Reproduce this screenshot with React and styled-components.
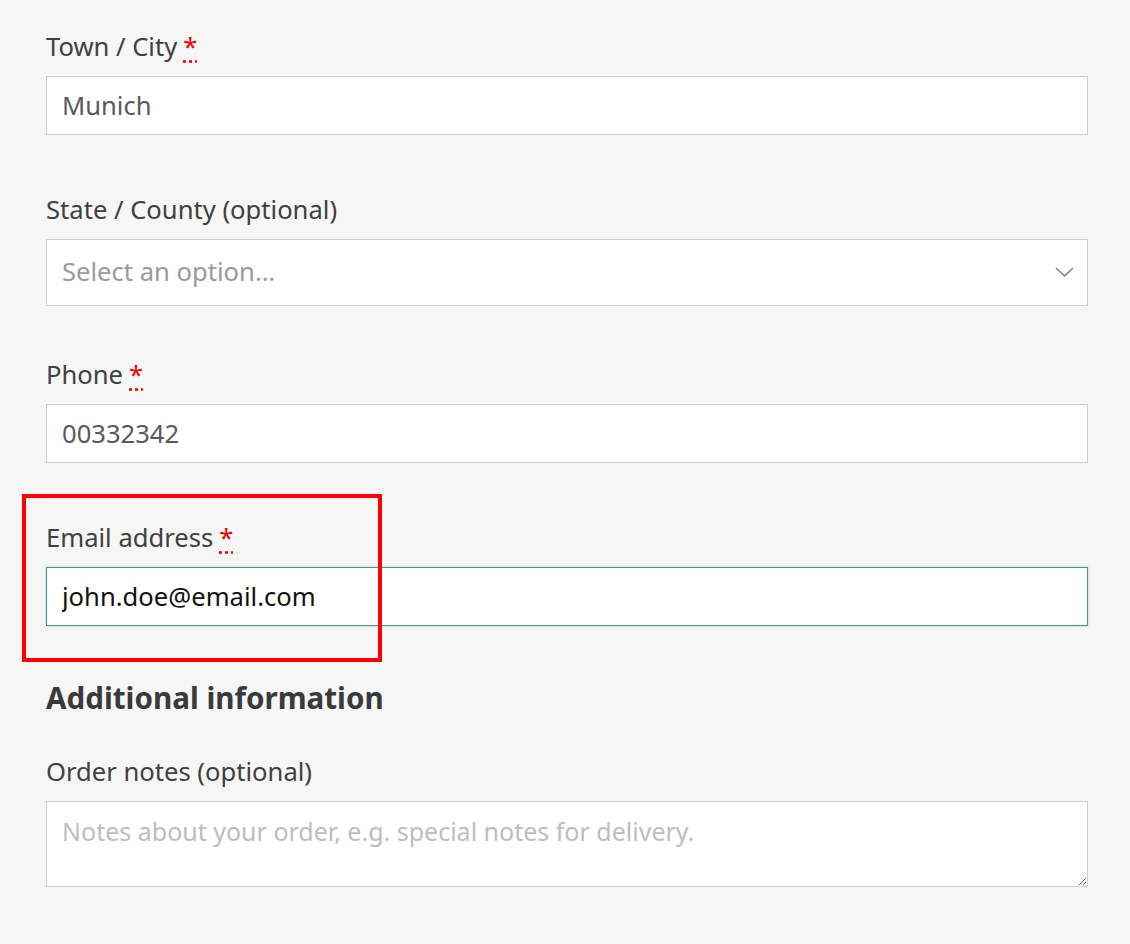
import React from 'react';
import styled, { createGlobalStyle } from 'styled-components';

const GlobalStyle = createGlobalStyle`
  html, body {
    margin: 0;
    padding: 0;
    background: #f6f6f6;
  }
  body {
    font-family: "Noto Sans", "Open Sans", sans-serif;
    color: #404040;
  }
`;

const Page = styled.main`
  box-sizing: border-box;
  width: 1130px;
  min-height: 944px;
  padding: 31px 42px 0 46px;
  background: #f6f6f6;
`;

const Field = styled.div`
  position: relative;
  display: flex;
  flex-direction: column;
  gap: 13px;
  margin-bottom: ${(p) => p.$after}px;
`;

const Label = styled.label`
  display: block;
  font-size: 25.6px;
  line-height: 32px;
  color: #404040;
`;

const Required = styled.abbr`
  color: #e00;
  margin-left: 6px;
  text-decoration: underline dotted #e00;
  text-underline-offset: 4px;
  cursor: help;
`;

const Input = styled.input`
  box-sizing: border-box;
  width: 100%;
  height: 59px;
  margin: 0;
  padding: 0 15px;
  border: 1px solid ${(p) => (p.$focus ? '#46958a' : '#d0d0d0')};
  box-shadow: ${(p) => (p.$focus ? '0 0 3px rgba(70, 149, 138, 0.35)' : 'none')};
  background: #fff;
  font-family: inherit;
  font-size: 25.6px;
  color: ${(p) => (p.$focus ? '#111' : '#5a5a5a')};
  outline: none;
`;

const SelectBox = styled.div`
  box-sizing: border-box;
  display: flex;
  align-items: center;
  justify-content: space-between;
  height: 67px;
  padding: 0 13px 2px 15px;
  border: 1px solid #d0d0d0;
  background: #fff;
  font-size: 25.6px;
  color: #9a9a9a;
  cursor: pointer;
`;

const TextArea = styled.textarea`
  box-sizing: border-box;
  display: block;
  width: 100%;
  height: 86px;
  margin: 0;
  padding: 13px 15px;
  border: 1px solid #d0d0d0;
  background: #fff;
  font-family: inherit;
  font-size: 25px;
  line-height: 32px;
  color: #333;
  outline: none;

  &::placeholder {
    color: #bdbdbd;
  }
`;

const Heading = styled.h3`
  margin: 54px 0 40px;
  font-size: 29.6px;
  line-height: 36px;
  font-weight: 700;
  color: #3a3a3a;
`;

const Highlight = styled.div`
  position: absolute;
  left: -24px;
  top: -28px;
  width: 360px;
  height: 168px;
  box-sizing: border-box;
  border: 4px solid #ff0000;
  pointer-events: none;
`;

const Chevron = () => (
  <svg width="19" height="10" viewBox="0 0 19 10" fill="none">
    <polyline points="1,1 9.5,9 18,1" stroke="#7a7a7a" strokeWidth="1.3" />
  </svg>
);

export default function App() {
  return (
    <>
      <GlobalStyle />
      <Page>
        <Field $after={59}>
          <Label htmlFor="city">
            Town / City<Required title="required">*</Required>
          </Label>
          <Input id="city" defaultValue="Munich" />
        </Field>

        <Field $after={53}>
          <Label>State / County (optional)</Label>
          <SelectBox>
            <span>Select an option…</span>
            <Chevron />
          </SelectBox>
        </Field>

        <Field $after={59}>
          <Label htmlFor="phone">
            Phone<Required title="required">*</Required>
          </Label>
          <Input id="phone" defaultValue="00332342" />
        </Field>

        <Field $after={0}>
          <Highlight />
          <Label htmlFor="email">
            Email address<Required title="required">*</Required>
          </Label>
          <Input id="email" $focus defaultValue="john.doe@email.com" />
        </Field>

        <Heading>Additional information</Heading>

        <Field $after={0}>
          <Label htmlFor="notes">Order notes (optional)</Label>
          <TextArea
            id="notes"
            placeholder="Notes about your order, e.g. special notes for delivery."
          />
        </Field>
      </Page>
    </>
  );
}
